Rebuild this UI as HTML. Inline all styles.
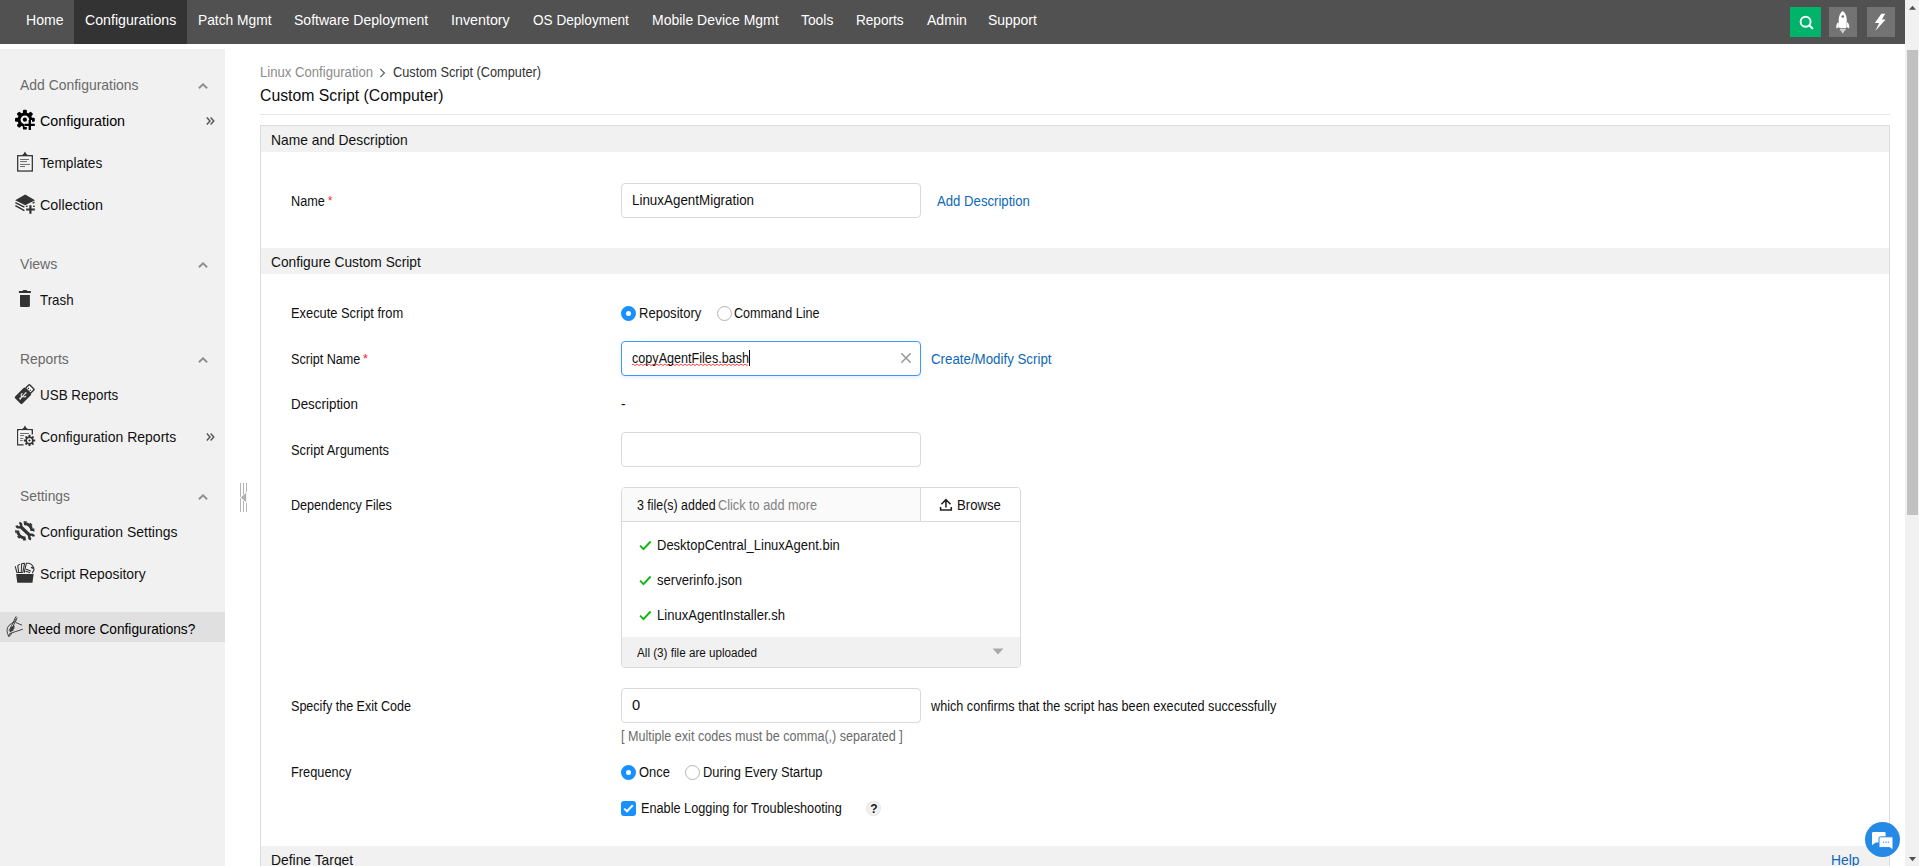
<!DOCTYPE html>
<html lang="en">
<head>
<meta charset="utf-8">
<title>Custom Script (Computer)</title>
<style>
*{box-sizing:border-box;margin:0;padding:0}
html,body{width:1919px;height:866px;overflow:hidden;background:#fff}
body{font-family:"Liberation Sans",Arial,sans-serif;font-size:13px;color:#222;position:relative}
.abs{position:absolute;white-space:nowrap}
/* top nav */
#nav{position:absolute;left:0;top:0;width:1905px;height:44px;background:#515151}
#nav .it{position:absolute;top:0;height:44px;line-height:40px;color:#fff;font-size:14px;text-align:center;white-space:nowrap}
#nav .it.act{background:#333}
.nbtn{position:absolute;top:7px;height:30px;width:28px;background:#737373}
/* sidebar */
#side{position:absolute;left:0;top:49px;width:225px;height:817px;background:#f1f1f1}
.sh{position:absolute;left:20px;font-size:14px;color:#6a6a6a;line-height:20px;white-space:nowrap}
.si{position:absolute;left:40px;font-size:14px;color:#1c1c1c;line-height:20px;white-space:nowrap}
.chev{position:absolute;left:198px;width:10px;height:6px}
.dbl{position:absolute;left:206px;width:9px;height:8px}
.ico{position:absolute}
/* main */
.lbl{position:absolute;left:291px;font-size:13px;line-height:18px;color:#222;white-space:nowrap;letter-spacing:-.1px}
.txt{position:absolute;font-size:13px;line-height:18px;color:#222;white-space:nowrap;letter-spacing:-.1px}
.sec{position:absolute;left:261px;width:1628px;height:26px;background:#f1f1f1;font-size:14px;line-height:26px;padding-left:10px;color:#222;white-space:nowrap}
.inp{position:absolute;left:621px;width:300px;height:35px;border:1px solid #d9d9d9;border-radius:4px;background:#fff}
.link{color:#0d68b8}
.req{color:#e8382e;font-size:12px}
.radio{position:absolute;width:15px;height:15px;border-radius:50%;border:1px solid #b4b4b4;background:#fff}
.radio.on{border:5px solid #1890ff;background:#fff}
.t{position:absolute;white-space:nowrap;line-height:20px;transform-origin:0 0}
</style>
</head>
<body>

<!-- ===== TOP NAV ===== -->
<div id="nav">
  <div class="it act" style="left:74px;width:113px"></div>
  <div class="nbtn" style="left:1790px;width:31px;background:#00b36b">
    <svg width="31" height="30" viewBox="0 0 31 30" style="position:absolute;left:0;top:0"><circle cx="15.6" cy="14.7" r="5" fill="none" stroke="#fff" stroke-width="1.9"/><path d="M19.3 18.4 L22.3 21.2" stroke="#fff" stroke-width="2.1" stroke-linecap="round"/></svg>
  </div>
  <div class="nbtn" style="left:1829px">
    <svg width="28" height="30" viewBox="0 0 28 30" style="position:absolute;left:0;top:0">
      <path d="M13.75 4.2 C15.3 4.4 17.8 8.2 17.8 13.4 L17.3 20.9 H10.2 L9.7 13.4 C9.7 8.2 12.2 4.4 13.75 4.2 Z" fill="#fff"/>
      <circle cx="13.75" cy="9.5" r="1.35" fill="#737373"/>
      <path d="M9.6 14.9 C7.2 16.4 6.9 18.9 7.5 21.4 L10 19.9 Z" fill="#fff"/>
      <path d="M17.9 14.9 C20.3 16.4 20.6 18.9 20 21.4 L17.5 19.9 Z" fill="#fff"/>
      <path d="M10.9 22.2 H16.7 M11.3 23.3 H16.3 M12.4 24.5 H15.1 M13.1 25.6 H14.4" stroke="#dcdcdc" stroke-width="1.1"/>
    </svg>
  </div>
  <div class="nbtn" style="left:1867px">
    <svg width="28" height="30" viewBox="0 0 28 30" style="position:absolute;left:0;top:0"><path d="M14.3 6.8 H18.2 L14.9 12.5 H18.6 L8.3 23.9 L12.2 15.9 H7.9 Z" fill="#fff"/></svg>
  </div>
</div>

<!-- ===== SCROLLBAR ===== -->
<div id="sb" style="position:absolute;left:1905px;top:0;width:14px;height:866px;background:#f1f1f1">
  <div style="position:absolute;left:2px;top:50px;width:11px;height:465px;background:#c1c1c1"></div>
  <svg style="position:absolute;left:0;top:0" width="14" height="866" viewBox="0 0 14 866"><path d="M4 9.8 L7.5 5.8 L11 9.8 Z M4 857 L7.5 861.2 L11 857 Z" fill="#505050"/></svg>
</div>

<!-- ===== SIDEBAR ===== -->
<div id="side">
  <!-- section headers (top relative to #side which starts at y=49) -->
  <svg class="chev" style="top:34px" viewBox="0 0 10 6"><path d="M0.9 5.3 L5 1.3 L9.1 5.3" fill="none" stroke="#8e8e8e" stroke-width="1.9"/></svg>

  <svg class="ico" style="left:14px;top:60px" width="22" height="22" viewBox="0 0 22 22">
    <g transform="translate(10.9,10.7)">
      <g fill="#000">
        <circle r="7.3"/>
        <g id="tth"><rect x="-2" y="-9.9" width="4" height="4.2" rx="1.2"/></g>
        <rect x="-2" y="-9.9" width="4" height="4.2" rx="1.2" transform="rotate(45)"/>
        <rect x="-2" y="-9.9" width="4" height="4.2" rx="1.2" transform="rotate(90)"/>
        <rect x="-2" y="-9.9" width="4" height="4.2" rx="1.2" transform="rotate(135)"/>
        <rect x="-2" y="-9.9" width="4" height="4.2" rx="1.2" transform="rotate(180)"/>
        <rect x="-2" y="-9.9" width="4" height="4.2" rx="1.2" transform="rotate(225)"/>
        <rect x="-2" y="-9.9" width="4" height="4.2" rx="1.2" transform="rotate(270)"/>
        <rect x="-2" y="-9.9" width="4" height="4.2" rx="1.2" transform="rotate(315)"/>
      </g>
      <circle r="4.3" fill="#f1f1f1"/>
      <circle r="2.1" fill="#000"/>
      <path d="M4.9 0.2 V10.4 M-0.4 5.1 H10" stroke="#f1f1f1" stroke-width="4.4" fill="none"/>
      <path d="M4.9 0.3 V10.3 M-0.3 5.1 H9.9" stroke="#000" stroke-width="2.3" fill="none"/>
    </g>
  </svg>
  <svg class="dbl" style="top:68px" viewBox="0 0 9 8"><path d="M0.8 0.6 L4 4 L0.8 7.4 M4.6 0.6 L7.8 4 L4.6 7.4" fill="none" stroke="#555" stroke-width="1.45"/></svg>

  <svg class="ico" style="left:14px;top:101px" width="22" height="22" viewBox="0 0 22 22">
    <rect x="3.7" y="5.7" width="14.6" height="15.3" fill="#fff" stroke="#333" stroke-width="1.3"/>
    <rect x="5.3" y="7.3" width="11.4" height="12.1" fill="#f1f1f1"/>
    <path d="M7.3 5.5 Q9.9 4.6 10.95 1.6 Q12 4.6 14.7 5.5 Z" fill="#333"/>
    <path d="M6.1 9.5 H15 M6.1 11.55 H13 M6.1 14.45 H16 M6.1 16.5 H11" stroke="#555" stroke-width="0.85"/>
  </svg>

  <svg class="ico" style="left:14px;top:143px" width="22" height="22" viewBox="0 0 22 22">
    <path d="M11.2 2.6 L21 8.2 L11.2 13.2 L1.2 8.2 Z" fill="#333"/>
    <path d="M1.4 10.6 L10.4 15.2 M1.4 13.7 L10.4 18.6" stroke="#333" stroke-width="1.5"/>
    <path d="M18.6 11.2 L20.6 10.2 M12 14.6 L13.6 13.9 M19 14.2 L20.8 14.4" stroke="#333" stroke-width="1.3"/>
    <path d="M16.4 12.9 V22 M11.7 17.5 H21.2" stroke="#f1f1f1" stroke-width="4.2"/>
    <path d="M16.4 13.2 V21.7 M12.1 17.5 H20.85" stroke="#333" stroke-width="2.2"/>
  </svg>

  <svg class="chev" style="top:213px" viewBox="0 0 10 6"><path d="M0.9 5.3 L5 1.3 L9.1 5.3" fill="none" stroke="#8e8e8e" stroke-width="1.9"/></svg>

  <svg class="ico" style="left:14px;top:238px" width="22" height="22" viewBox="0 0 22 22">
    <path d="M4.9 4 H8.4 L9.4 2.9 H12.4 L13.4 4 H16.9 V5.9 H4.9 Z" fill="#333"/>
    <path d="M6 8.1 H15.9 V18.7 Q15.9 19.9 14.7 19.9 H7.2 Q6 19.9 6 18.7 Z" fill="#333"/>
  </svg>

  <svg class="chev" style="top:308px" viewBox="0 0 10 6"><path d="M0.9 5.3 L5 1.3 L9.1 5.3" fill="none" stroke="#8e8e8e" stroke-width="1.9"/></svg>

  <svg class="ico" style="left:14px;top:334px" width="22" height="22" viewBox="0 0 22 22">
    <g transform="translate(9.3,12.5) rotate(-45)">
      <rect x="-7.7" y="-5.1" width="14.4" height="10.2" rx="1.2" fill="#333"/>
      <rect x="6.6" y="-3.55" width="5.5" height="7.1" rx=".8" fill="#fff" stroke="#333" stroke-width="1.4"/>
      <path d="M8.6 -1.9 V-0.7 M8.6 0.7 V1.9" stroke="#333" stroke-width="1.3"/>
      <path d="M-4.6 0 H3.2 M-2.6 0 L-0.9 -2.2 H1 M-1.3 0 L0.3 2.2 H1.6" stroke="#f1f1f1" stroke-width="1.05" fill="none"/>
      <circle cx="-4.3" cy="0" r="1.05" fill="#f1f1f1"/>
      <path d="M3 -1.1 L4.7 0 L3 1.1 Z" fill="#f1f1f1"/>
    </g>
  </svg>

  <svg class="ico" style="left:14px;top:375px" width="22" height="22" viewBox="0 0 22 22">
    <path d="M9.6 20.9 H3.7 V5.7 H18.3 V10.6" fill="none" stroke="#333" stroke-width="1.3"/>
    <path d="M5 20 V7 H17" fill="none" stroke="#fff" stroke-width="1"/>
    <path d="M7.3 5.5 Q9.9 4.6 10.95 1.6 Q12 4.6 14.7 5.5 Z" fill="#333"/>
    <path d="M6.1 9.5 H15 M6.1 11.55 H10 M6.1 14.45 H9.2 M6.1 16.5 H8.6" stroke="#555" stroke-width="0.85"/>
    <g transform="translate(15.5,16.5)">
      <circle r="3.3" fill="none" stroke="#333" stroke-width="1.6"/>
      <g fill="#333">
        <rect x="-1" y="-5.7" width="2" height="2.2" rx=".6"/>
        <rect x="-1" y="-5.7" width="2" height="2.2" rx=".6" transform="rotate(45)"/>
        <rect x="-1" y="-5.7" width="2" height="2.2" rx=".6" transform="rotate(90)"/>
        <rect x="-1" y="-5.7" width="2" height="2.2" rx=".6" transform="rotate(135)"/>
        <rect x="-1" y="-5.7" width="2" height="2.2" rx=".6" transform="rotate(180)"/>
        <rect x="-1" y="-5.7" width="2" height="2.2" rx=".6" transform="rotate(225)"/>
        <rect x="-1" y="-5.7" width="2" height="2.2" rx=".6" transform="rotate(270)"/>
        <rect x="-1" y="-5.7" width="2" height="2.2" rx=".6" transform="rotate(315)"/>
      </g>
      <path d="M0 -1.3 L1.3 0 L0 1.3 L-1.3 0 Z" fill="#333"/>
    </g>
  </svg>
  <svg class="dbl" style="top:384px" viewBox="0 0 9 8"><path d="M0.8 0.6 L4 4 L0.8 7.4 M4.6 0.6 L7.8 4 L4.6 7.4" fill="none" stroke="#555" stroke-width="1.45"/></svg>

  <svg class="chev" style="top:445px" viewBox="0 0 10 6"><path d="M0.9 5.3 L5 1.3 L9.1 5.3" fill="none" stroke="#8e8e8e" stroke-width="1.9"/></svg>

  <svg class="ico" style="left:14px;top:470px" width="22" height="22" viewBox="0 0 22 22">
    <g fill="none" stroke="#333">
      <path d="M6.4 7.5 L16 16.5" stroke-width="3.1"/>
      <path d="M5.30 3.83 A2.3 2.3 0 1 1 2.63 6.50" stroke-width="2.4"/>
      <path d="M17.10 20.17 A2.3 2.3 0 1 1 19.77 17.50" stroke-width="2.4"/>
      <path d="M9.93 4.75 A7.1 7.1 0 0 1 17.90 12.05" stroke-width="2.9"/>
      <path d="M9.72 2.97 A8.9 8.9 0 0 1 19.67 12.58" stroke-width="1.5" stroke-dasharray="3 3.3"/>
      <path d="M11.67 18.85 A7.1 7.1 0 0 1 3.70 11.55" stroke-width="2.9"/>
      <path d="M11.88 20.63 A8.9 8.9 0 0 1 1.93 11.02" stroke-width="1.5" stroke-dasharray="3 3.3"/>
    </g>
  </svg>

  <svg class="ico" style="left:14px;top:512px" width="22" height="22" viewBox="0 0 22 22">
    <path d="M2.1 13.1 H19.6 L18.5 21.8 H3.3 Z" fill="#333"/>
    <g fill="none" stroke="#333" stroke-width="1.1" stroke-linecap="round" stroke-linejoin="round">
      <path d="M1.3 5.6 L2.9 11.5 H8.4 M5.6 3.4 L3.8 4.6 L4.6 11"/>
      <path d="M10.4 2.2 L7.6 2.8 L7.3 10.6 M10.5 2.8 L8.9 10.8"/>
      <path d="M10.2 11.5 L12.4 2.2 H14.9 C17.6 3 19.6 5.2 20 8.4 L18.5 11.7"/>
      <path d="M12.4 8.2 L16.6 9.9 M11.8 10.2 L15.6 11.6"/>
      <path d="M17.6 6.5 L18.9 7.2" stroke-width="1.5"/>
    </g>
  </svg>

  <div style="position:absolute;left:0;top:563px;width:225px;height:30px;background:#e0e0e0"></div>
  <svg class="ico" style="left:4px;top:566px" width="22" height="24" viewBox="0 0 22 24">
    <g fill="none" stroke="#333" stroke-width="0.9">
      <path d="M13.2 2.6 L6.6 16.6 M11.6 2.2 L5 16 M12.6 1.8 L11 2.4 M11 4.5 L12.4 5.3 M10.2 6.2 L11.6 7"/>
      <path d="M10.5 7.2 Q3.4 9.4 3 15.2 Q3.2 18.6 4.6 21.4 L5.6 18.6"/>
      <path d="M12 7.6 L18 10.2 M5.6 18.6 L18.8 14.2 M7.8 18 L6.2 20.6 L4.6 21.4"/>
      <path d="M6.4 13.4 L10.6 11.4 M6 15 L10.4 13 M5.8 16.6 L9.6 14.8" stroke-width="1.2"/>
    </g>
  </svg>
</div>


<!-- ===== SPLITTER ===== -->
<svg style="position:absolute;left:238px;top:481px" width="12" height="33" viewBox="0 0 12 33">
  <path d="M2.5 2 V31 M5.5 2 V31 M8.5 2 V31" stroke="#b4b4b4" stroke-width="1"/>
  <path d="M2.8 16.5 L8 12.1 V20.9 Z" fill="#b0b0b0" stroke="#fff" stroke-width="1.6" paint-order="stroke"/>
</svg>

<!-- ===== MAIN ===== -->
<div id="main">
  <!-- breadcrumb + title -->
  <svg class="abs" style="left:379px;top:67.7px" width="7" height="10" viewBox="0 0 7 10"><path d="M1.3 0.9 L5.4 5 L1.3 9.1" fill="none" stroke="#666" stroke-width="1.3"/></svg>
  <div class="abs" style="left:260px;top:114px;width:1630px;height:1px;background:#e6e6e6"></div>

  <!-- panel -->
  <div class="abs" style="left:260px;top:125px;width:1630px;height:760px;border:1px solid #dcdcdc"></div>
  <div class="sec" style="top:126px"></div>

  <div class="inp" style="top:183px"></div>

  <div class="sec" style="top:248px"></div>

  <div class="radio on" style="left:621px;top:306px"></div>
  <div class="radio" style="left:717px;top:306px"></div>

  <div class="inp" style="top:341px;border-color:#4096ff;box-shadow:0 2px 4px rgba(64,120,200,.13)"></div>
  <svg class="abs" style="left:0;top:0;pointer-events:none" width="800" height="380" viewBox="0 0 800 380"><path d="M632 364.8 q1 -1.5 2 0 t2 0 q1 -1.5 2 0 t2 0 q1 -1.5 2 0 t2 0 q1 -1.5 2 0 t2 0 q1 -1.5 2 0 t2 0 q1 -1.5 2 0 t2 0 q1 -1.5 2 0 t2 0 q1 -1.5 2 0 t2 0 q1 -1.5 2 0 t2 0 q1 -1.5 2 0 t2 0 q1 -1.5 2 0 t2 0 q1 -1.5 2 0 t2 0 q1 -1.5 2 0 t2 0 q1 -1.5 2 0 t2 0 q1 -1.5 2 0 t2 0 q1 -1.5 2 0 t2 0 q1 -1.5 2 0 t2 0 q1 -1.5 2 0 t2 0 q1 -1.5 2 0 t2 0 q1 -1.5 2 0 t2 0 q1 -1.5 2 0 t2 0 q1 -1.5 2 0 t2 0 q1 -1.5 2 0 t2 0 q1 -1.5 2 0 t2 0 q1 -1.5 2 0 t2 0 q1 -1.5 2 0 t2 0 q1 -1.5 2 0 t2 0 q1 -1.5 2 0 t2 0 q1 -1.5 2 0 t2 0" fill="none" stroke="#ff3333" stroke-width="0.9"/></svg>
  <div class="abs" style="left:749px;top:350px;width:1px;height:16px;background:#000"></div>
  <svg class="abs" style="left:900px;top:352px" width="12" height="12" viewBox="0 0 12 12"><path d="M1.3 1.3 L10.7 10.7 M10.7 1.3 L1.3 10.7" stroke="#999" stroke-width="1.55"/></svg>


  <div class="inp" style="top:432px"></div>

  <div class="abs" style="left:621px;top:487px;width:400px;height:181px;border:1px solid #d9d9d9;border-radius:4px;background:#fff;overflow:hidden">
    <div style="position:absolute;left:0;top:0;width:299px;height:34px;background:#fafafa;border-bottom:1px solid #d9d9d9"></div>
    <div style="position:absolute;left:298px;top:0;width:101px;height:34px;background:#fff;border-left:1px solid #d9d9d9;border-bottom:1px solid #d9d9d9"></div>
    <div style="position:absolute;left:0;top:149px;width:399px;height:31px;background:#f1f1f1"></div>
  </div>
  <svg class="abs" style="left:939px;top:498px" width="14" height="14" viewBox="0 0 14 14"><path d="M6.95 9.6 V1.8 M2.4 6.2 L6.95 1.6 L11.5 6.2 M1.6 9 V12 H12.3 V9" fill="none" stroke="#222" stroke-width="1.55"/></svg>

  <svg class="abs" style="left:639px;top:539.6px" width="13" height="11" viewBox="0 0 13 11"><path d="M1.1 5.7 L4.5 9.1 L11.6 1.5" fill="none" stroke="#10b510" stroke-width="1.9"/></svg>
  <svg class="abs" style="left:639px;top:574.6px" width="13" height="11" viewBox="0 0 13 11"><path d="M1.1 5.7 L4.5 9.1 L11.6 1.5" fill="none" stroke="#10b510" stroke-width="1.9"/></svg>
  <svg class="abs" style="left:639px;top:609.6px" width="13" height="11" viewBox="0 0 13 11"><path d="M1.1 5.7 L4.5 9.1 L11.6 1.5" fill="none" stroke="#10b510" stroke-width="1.9"/></svg>
  <svg class="abs" style="left:992px;top:648px" width="12" height="7" viewBox="0 0 12 7"><path d="M0.6 0.6 H11.4 L6 6.4 Z" fill="#a9a9a9"/></svg>

  <div class="inp" style="top:688px"></div>

  <div class="radio on" style="left:621px;top:765px"></div>
  <div class="radio" style="left:685px;top:765px"></div>

  <div class="abs" style="left:621px;top:801px;width:15px;height:15px;border-radius:3px;background:#1890ff"></div>
  <svg class="abs" style="left:623px;top:804px" width="11" height="9" viewBox="0 0 11 9"><path d="M1.2 4.6 L4 7.3 L9.8 1.3" fill="none" stroke="#fff" stroke-width="2"/></svg>
  <div class="abs" style="left:866px;top:801px;width:15px;height:15px;border-radius:50%;background:#f0f0f0;box-shadow:inset 0 0 0 1px #e9e9e9;font-size:12px;font-weight:bold;line-height:16px;text-align:center;color:#1a1a1a;padding-left:1px">?</div>

  <div class="sec" style="top:846px"></div>

  <!-- chat bubble -->
  <div class="abs" style="left:1865px;top:822px;width:35px;height:35px;border-radius:50%;background:#2589e6"></div>
  <svg class="abs" style="left:1871px;top:831px" width="24" height="21" viewBox="0 0 24 21">
    <path d="M2.2 1 H13.4 Q14.6 1 14.6 2.2 V10.2 Q14.6 11.4 13.4 11.4 H4.6 L1 14.2 V2.2 Q1 1 2.2 1 Z" fill="#fff"/>
    <path d="M9.2 5.8 H20.8 Q22 5.8 22 7 V19 L18.6 16.6 H9.2 Q8 16.6 8 15.4 V7 Q8 5.8 9.2 5.8 Z" fill="#fff" stroke="#2589e6" stroke-width="1"/>
    <path d="M12 11.2 H13.3 M14.4 11.2 H15.7 M16.8 11.2 H18.1" stroke="#2589e6" stroke-width="1"/>
  </svg>
</div>

<!-- ===== TEXT ===== -->
<div id="n1" class="t" style="left:26px;top:10px;font-size:15px;color:#fff;transform:scaleX(0.9378);">Home</div>
<div id="n2" class="t" style="left:85px;top:10px;font-size:15px;color:#fff;transform:scaleX(0.9430);">Configurations</div>
<div id="n3" class="t" style="left:198px;top:10px;font-size:15px;color:#fff;transform:scaleX(0.9185);">Patch Mgmt</div>
<div id="n4" class="t" style="left:294px;top:10px;font-size:15px;color:#fff;transform:scaleX(0.9359);">Software Deployment</div>
<div id="n5" class="t" style="left:451px;top:10px;font-size:15px;color:#fff;transform:scaleX(0.9518);">Inventory</div>
<div id="n6" class="t" style="left:533px;top:10px;font-size:15px;color:#fff;transform:scaleX(0.9057);">OS Deployment</div>
<div id="n7" class="t" style="left:652px;top:10px;font-size:15px;color:#fff;transform:scaleX(0.9318);">Mobile Device Mgmt</div>
<div id="n8" class="t" style="left:801px;top:10px;font-size:15px;color:#fff;transform:scaleX(0.9224);">Tools</div>
<div id="n9" class="t" style="left:856px;top:10px;font-size:15px;color:#fff;transform:scaleX(0.9061);">Reports</div>
<div id="n10" class="t" style="left:927px;top:10px;font-size:15px;color:#fff;transform:scaleX(0.9364);">Admin</div>
<div id="n11" class="t" style="left:988px;top:10px;font-size:15px;color:#fff;transform:scaleX(0.9308);">Support</div>
<div id="s1" class="t" style="left:20px;top:75px;font-size:14.5px;color:#6a6a6a;transform:scaleX(0.9609);">Add Configurations</div>
<div id="s2" class="t" style="left:40px;top:111px;font-size:14.5px;color:#000;transform:scaleX(0.9858);">Configuration</div>
<div id="s3" class="t" style="left:40px;top:153px;font-size:14.5px;color:#111;transform:scaleX(0.9426);">Templates</div>
<div id="s4" class="t" style="left:40px;top:195px;font-size:14.5px;color:#111;transform:scaleX(0.9900);">Collection</div>
<div id="s5" class="t" style="left:20px;top:254px;font-size:14.5px;color:#6a6a6a;transform:scaleX(0.9712);">Views</div>
<div id="s6" class="t" style="left:40px;top:290px;font-size:14.5px;color:#111;transform:scaleX(0.9189);">Trash</div>
<div id="s7" class="t" style="left:20px;top:349px;font-size:14.5px;color:#6a6a6a;transform:scaleX(0.9593);">Reports</div>
<div id="s8" class="t" style="left:40px;top:385px;font-size:14.5px;color:#111;transform:scaleX(0.9252);">USB Reports</div>
<div id="s9" class="t" style="left:40px;top:427px;font-size:14.5px;color:#111;transform:scaleX(0.9657);">Configuration Reports</div>
<div id="s10" class="t" style="left:20px;top:486px;font-size:14.5px;color:#6a6a6a;transform:scaleX(0.9524);">Settings</div>
<div id="s11" class="t" style="left:40px;top:522px;font-size:14.5px;color:#111;transform:scaleX(0.9631);">Configuration Settings</div>
<div id="s12" class="t" style="left:40px;top:564px;font-size:14.5px;color:#111;transform:scaleX(0.9568);">Script Repository</div>
<div id="s13" class="t" style="left:28px;top:619px;font-size:14.5px;color:#000;transform:scaleX(0.9435);">Need more Configurations?</div>
<div id="bc1" class="t" style="left:260px;top:62px;font-size:14px;color:#8c8c8c;transform:scaleX(0.9372);">Linux Configuration</div>
<div id="bc2" class="t" style="left:393px;top:62px;font-size:14px;color:#333;transform:scaleX(0.9102);">Custom Script (Computer)</div>
<div id="title" class="t" style="left:260px;top:86px;font-size:16px;color:#0c0c0c;transform:scaleX(0.9874);">Custom Script (Computer)</div>
<div id="h1" class="t" style="left:271px;top:130px;font-size:14.5px;color:#111;transform:scaleX(0.9529);">Name and Description</div>
<div id="h2" class="t" style="left:271px;top:252px;font-size:14.5px;color:#111;transform:scaleX(0.9484);">Configure Custom Script</div>
<div id="h3" class="t" style="left:271px;top:850px;font-size:14.5px;color:#111;transform:scaleX(0.9555);">Define Target</div>
<div id="help" class="t" style="left:1831px;top:850px;font-size:14px;color:#0d68b8;transform:scaleX(0.9892);">Help</div>
<div id="st1" class="t" style="left:328px;top:191px;font-size:13px;color:#ff2020;transform:scaleX(0.8443);">*</div>
<div id="st2" class="t" style="left:363px;top:349px;font-size:13px;color:#ff2020;transform:scaleX(0.9679);">*</div>
<div id="L1" class="t" style="left:291px;top:191px;font-size:14px;color:#101010;transform:scaleX(0.9068);">Name</div>
<div id="L2" class="t" style="left:291px;top:303px;font-size:14px;color:#101010;transform:scaleX(0.9181);">Execute Script from</div>
<div id="L3" class="t" style="left:291px;top:349px;font-size:14px;color:#101010;transform:scaleX(0.9005);">Script Name</div>
<div id="L4" class="t" style="left:291px;top:394px;font-size:14px;color:#101010;transform:scaleX(0.9563);">Description</div>
<div id="L5" class="t" style="left:291px;top:440px;font-size:14px;color:#101010;transform:scaleX(0.9198);">Script Arguments</div>
<div id="L6" class="t" style="left:291px;top:495px;font-size:14px;color:#101010;transform:scaleX(0.9000);">Dependency Files</div>
<div id="L7" class="t" style="left:291px;top:696px;font-size:14px;color:#101010;transform:scaleX(0.8970);">Specify the Exit Code</div>
<div id="L8" class="t" style="left:291px;top:762px;font-size:14px;color:#101010;transform:scaleX(0.9135);">Frequency</div>
<div id="v1" class="t" style="left:632px;top:190px;font-size:14px;color:#101010;transform:scaleX(0.9564);">LinuxAgentMigration</div>
<div id="l1" class="t" style="left:937px;top:191px;font-size:14px;color:#0d68b8;transform:scaleX(0.9396);">Add Description</div>
<div id="r1" class="t" style="left:639px;top:303px;font-size:14px;color:#101010;transform:scaleX(0.9299);">Repository</div>
<div id="r2" class="t" style="left:734px;top:303px;font-size:14px;color:#101010;transform:scaleX(0.9002);">Command Line</div>
<div id="v2" class="t" style="left:632px;top:348px;font-size:14px;color:#101010;transform:scaleX(0.9004);">copyAgentFiles.bash</div>
<div id="l2" class="t" style="left:931px;top:349px;font-size:14px;color:#0d68b8;transform:scaleX(0.9501);">Create/Modify Script</div>
<div id="dash" class="t" style="left:621px;top:394px;font-size:14px;color:#101010;transform:scaleX(0.9901);">-</div>
<div id="d1" class="t" style="left:637px;top:495px;font-size:14px;color:#101010;transform:scaleX(0.8860);">3 file(s) added</div>
<div id="d2" class="t" style="left:718px;top:495px;font-size:14px;color:#828282;transform:scaleX(0.9085);">Click to add more</div>
<div id="d3" class="t" style="left:957px;top:495px;font-size:14px;color:#101010;transform:scaleX(0.9379);">Browse</div>
<div id="f1" class="t" style="left:657px;top:535px;font-size:14px;color:#101010;transform:scaleX(0.9281);">DesktopCentral_LinuxAgent.bin</div>
<div id="f2" class="t" style="left:657px;top:570px;font-size:14px;color:#101010;transform:scaleX(0.9331);">serverinfo.json</div>
<div id="f3" class="t" style="left:657px;top:605px;font-size:14px;color:#101010;transform:scaleX(0.9348);">LinuxAgentInstaller.sh</div>
<div id="f4" class="t" style="left:637px;top:643px;font-size:12.5px;color:#101010;transform:scaleX(0.9339);">All (3) file are uploaded</div>
<div id="zero" class="t" style="left:632px;top:695px;font-size:14px;color:#101010;transform:scaleX(1.0498);">0</div>
<div id="e1" class="t" style="left:931px;top:696px;font-size:14px;color:#101010;transform:scaleX(0.9038);">which confirms that the script has been executed successfully</div>
<div id="e2" class="t" style="left:621px;top:726px;font-size:14px;color:#6b6b6b;transform:scaleX(0.8983);">[ Multiple exit codes must be comma(,) separated ]</div>
<div id="q1" class="t" style="left:639px;top:762px;font-size:14px;color:#101010;transform:scaleX(0.9227);">Once</div>
<div id="q2" class="t" style="left:703px;top:762px;font-size:14px;color:#101010;transform:scaleX(0.9192);">During Every Startup</div>
<div id="c1" class="t" style="left:641px;top:798px;font-size:14px;color:#101010;transform:scaleX(0.9079);">Enable Logging for Troubleshooting</div>
</body>
</html>
